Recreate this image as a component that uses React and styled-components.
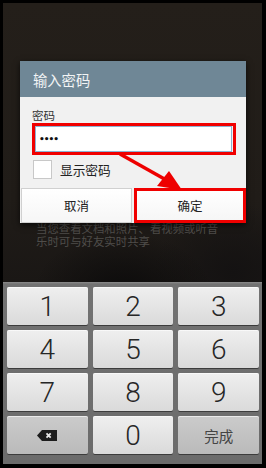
import React from "react";
import styled, { createGlobalStyle } from "styled-components";

const GlobalStyle = createGlobalStyle`
  html, body {
    margin: 0;
    padding: 0;
    background: #000;
  }
  * {
    box-sizing: border-box;
  }
`;

const keys = [
  { label: "1" },
  { label: "2" },
  { label: "3" },
  { label: "4" },
  { label: "5" },
  { label: "6" },
  { label: "7" },
  { label: "8" },
  { label: "9" },
  { icon: "delete", special: true },
  { label: "0" },
  { text: "完成", special: true },
];

const DeleteIcon = () => (
  <svg width="20" height="11" viewBox="0 0 20 11">
    <path d="M0 5.5 L5 0 H20 V11 H5 Z" fill="#1c1c1c" />
    <path
      d="M9.5 3.3 L13.7 7.7 M13.7 3.3 L9.5 7.7"
      stroke="#e6e6e6"
      strokeWidth="1.8"
    />
  </svg>
);

const App = () => {
  return (
    <>
      <GlobalStyle />
      <Frame>
        <Screen>
          <Backdrop>
            <BehindText>
              当您查看文档和照片、看视频或听音
              <br />
              乐时可与好友实时共享
            </BehindText>
            <Dialog>
              <DialogTitle>输入密码</DialogTitle>
              <DialogBody>
                <FieldLabel>密码</FieldLabel>
                <Highlight>
                  <PasswordInput>••••</PasswordInput>
                </Highlight>
                <CheckRow>
                  <CheckBox />
                  <CheckText>显示密码</CheckText>
                </CheckRow>
              </DialogBody>
              <ButtonRow>
                <DialogButton>取消</DialogButton>
                <Highlight $button>
                  <DialogButton>确定</DialogButton>
                </Highlight>
              </ButtonRow>
            </Dialog>
            <Arrow viewBox="0 0 259 279" width="259" height="279">
              <line
                x1="117"
                y1="151"
                x2="165"
                y2="178"
                stroke="#ee0000"
                strokeWidth="3.5"
              />
              <polygon
                points="179,187 154,183 166,168"
                fill="#ee0000"
              />
            </Arrow>
          </Backdrop>
          <Keypad>
            {keys.map((k, i) => (
              <Key key={i} $special={k.special}>
                {k.icon ? <DeleteIcon /> : k.text ? <KeyText>{k.text}</KeyText> : k.label}
              </Key>
            ))}
          </Keypad>
        </Screen>
      </Frame>
    </>
  );
};

const Frame = styled.div`
  width: 266px;
  height: 468px;
  padding: 3px 4px 4px 3px;
  background: #000;
`;

const Screen = styled.div`
  height: 100%;
  display: flex;
  flex-direction: column;
  font-family: "Noto Sans CJK SC", "Noto Sans", sans-serif;
`;

const Backdrop = styled.div`
  position: relative;
  height: 279px;
  padding: 219px 0 0 33px;
  background:
    radial-gradient(ellipse 90px 60px at 120px 290px, #0c0b0b 0%, rgba(12, 11, 11, 0) 100%),
    radial-gradient(ellipse 80px 70px at 230px 270px, #141212 0%, rgba(20, 18, 18, 0) 100%),
    linear-gradient(#241f1a, #201c18 70%, #1a1715);
`;

const BehindText = styled.div`
  font-size: 11.4px;
  line-height: 13px;
  color: #4f4d4a;
`;

const Dialog = styled.div`
  position: absolute;
  left: 17px;
  top: 58px;
  width: 226px;
  background: #f1f1f1;
  box-shadow: 0 2px 6px rgba(0, 0, 0, 0.7);
`;

const DialogTitle = styled.div`
  height: 36px;
  padding-left: 13px;
  display: flex;
  align-items: center;
  background: #6f8796;
  color: #f2f4f5;
  font-size: 14.3px;
`;

const DialogBody = styled.div`
  padding: 10px 10px 0 12px;
  display: flex;
  flex-direction: column;
`;

const FieldLabel = styled.div`
  font-size: 11.5px;
  line-height: 16px;
  color: #333;
`;

const Highlight = styled.div`
  border: 3px solid #f00000;
  padding: ${(p) => (p.$button ? "0" : "0 1px 0 0")};
  display: flex;
`;

const PasswordInput = styled.div`
  flex: 1;
  height: 26px;
  background: #fff;
  border: 1px solid #8db3d3;
  padding-left: 3px;
  font-family: "DejaVu Sans", sans-serif;
  font-weight: bold;
  font-size: 9px;
  letter-spacing: -1px;
  line-height: 24px;
  color: #111;
`;

const CheckRow = styled.div`
  margin-top: 5px;
  display: flex;
  align-items: center;
  gap: 8px;
  padding-left: 1px;
`;

const CheckBox = styled.div`
  width: 19px;
  height: 19px;
  background: #fff;
  border: 1px solid #c8c8c8;
`;

const CheckText = styled.div`
  font-size: 12.7px;
  color: #222;
`;

const ButtonRow = styled.div`
  margin-top: 9px;
  padding-left: 1px;
  display: grid;
  grid-template-columns: 111px 112px;
  gap: 2px;
`;

const DialogButton = styled.div`
  flex: 1;
  height: 35px;
  display: flex;
  align-items: center;
  justify-content: center;
  background: linear-gradient(#ffffff, #f6f6f6);
  border: 1px solid #d0d0d0;
  font-size: 12.5px;
  color: #222;
  ${Highlight} & {
    height: 29px;
    border: none;
  }
`;

const Arrow = styled.svg`
  position: absolute;
  left: 0;
  top: 0;
  pointer-events: none;
`;

const Keypad = styled.div`
  flex: 1;
  display: grid;
  grid-template-columns: repeat(3, 1fr);
  grid-auto-rows: 38px;
  gap: 5px;
  padding: 5px 3px 0 4px;
  background: linear-gradient(#8c8c8c, #727272 2px, #6b6b6b);
`;

const Key = styled.div`
  display: flex;
  align-items: center;
  justify-content: center;
  border-radius: 2px;
  background: ${(p) =>
    p.$special
      ? "linear-gradient(#cbcbcb, #bababa)"
      : "linear-gradient(#efefef, #dadada)"};
  box-shadow: 0 1px 0 #3c3c3c, inset 0 1px 0 rgba(255, 255, 255, 0.6);
  font-family: Roboto, "Open Sans", sans-serif;
  font-weight: 300;
  font-size: 28px;
  color: #262626;
`;

const KeyText = styled.span`
  font-family: "Noto Sans CJK SC", sans-serif;
  font-size: 14.5px;
  font-weight: 400;
  color: #444;
`;

export default App;
